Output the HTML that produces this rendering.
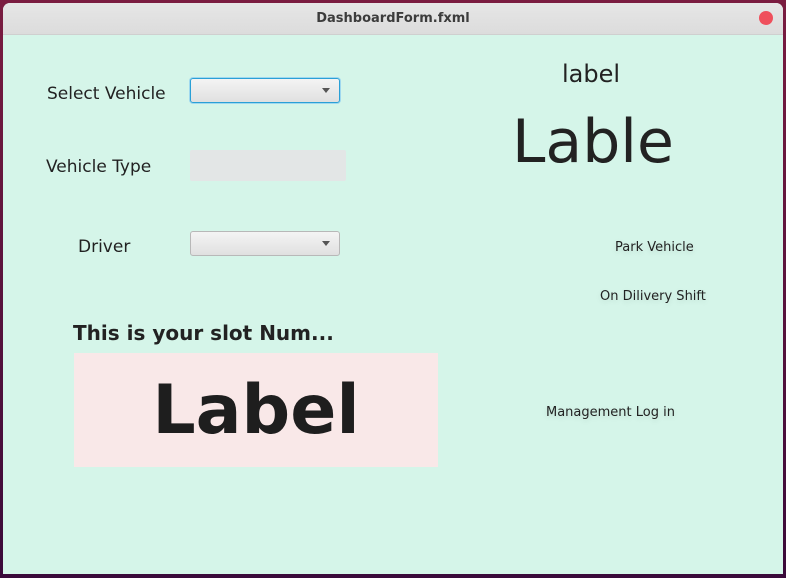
<!DOCTYPE html>
<html><head><style>
html,body{margin:0;padding:0;width:786px;height:578px;overflow:hidden;background:linear-gradient(#7a1c40,#3a0a3a);font-family:"DejaVu Sans","Liberation Sans",sans-serif;}
#win{position:absolute;left:3px;top:3px;width:780px;height:571px;background:#d5f5e9;border-radius:7px 7px 0 0;overflow:hidden}
#tb{position:absolute;left:0;top:0;width:780px;height:31px;background:linear-gradient(#e6e6e6,#dcdcdc);border-bottom:1px solid #cfcfcf;text-align:center;line-height:31px;font-size:13px;font-weight:bold;color:#3c3c3c}
#close{position:absolute;right:10px;top:8px;width:14px;height:14px;border-radius:50%;background:#ef4f5c}
.t{position:absolute;color:#222;white-space:nowrap}
.cb{position:absolute;width:148px;height:23px;border:1px solid #b8b8b8;border-radius:3px;background:linear-gradient(#f4f4f4,#e0e0e0)}
.cb:after{content:"";position:absolute;right:9px;top:9px;border-left:4px solid transparent;border-right:4px solid transparent;border-top:5px solid #555}
.lk{position:absolute;font-size:13px;color:#222;white-space:nowrap;text-shadow:0 2px 6px rgba(0,0,0,.12)}
</style></head><body>
<div id="win">
<div id="tb">DashboardForm.fxml<div id="close"></div></div>
<div class="t" style="left:44px;top:81px;font-size:17px">Select Vehicle</div>
<div class="cb" style="left:187px;top:75px;border:1px solid #2aa0d6;box-shadow:0 0 0 1px #9fd8ef"></div>
<div class="t" style="left:43px;top:154px;font-size:17px">Vehicle Type</div>
<div style="position:absolute;left:187px;top:147px;width:156px;height:31px;background:#e3e6e6;border-radius:2px"></div>
<div class="t" style="left:75px;top:234px;font-size:17px">Driver</div>
<div class="cb" style="left:187px;top:228px"></div>
<div class="t" style="left:559px;top:57px;font-size:24px">label</div>
<div class="t" style="left:509px;top:104px;font-size:60px">Lable</div>
<div class="lk" style="left:612px;top:237px">Park Vehicle</div>
<div class="lk" style="left:597px;top:286px">On Dilivery Shift</div>
<div class="lk" style="left:543px;top:402px">Management Log in</div>
<div class="t" style="left:70px;top:318px;font-size:20px;font-weight:bold">This is your slot Num...</div>
<div style="position:absolute;left:71px;top:350px;width:364px;height:114px;background:#f9e8e8"></div>
<div class="t" style="left:71px;top:368px;width:364px;text-align:center;font-size:68px;font-weight:bold;color:#1e1e1e">Label</div>
</div>
</body></html>
